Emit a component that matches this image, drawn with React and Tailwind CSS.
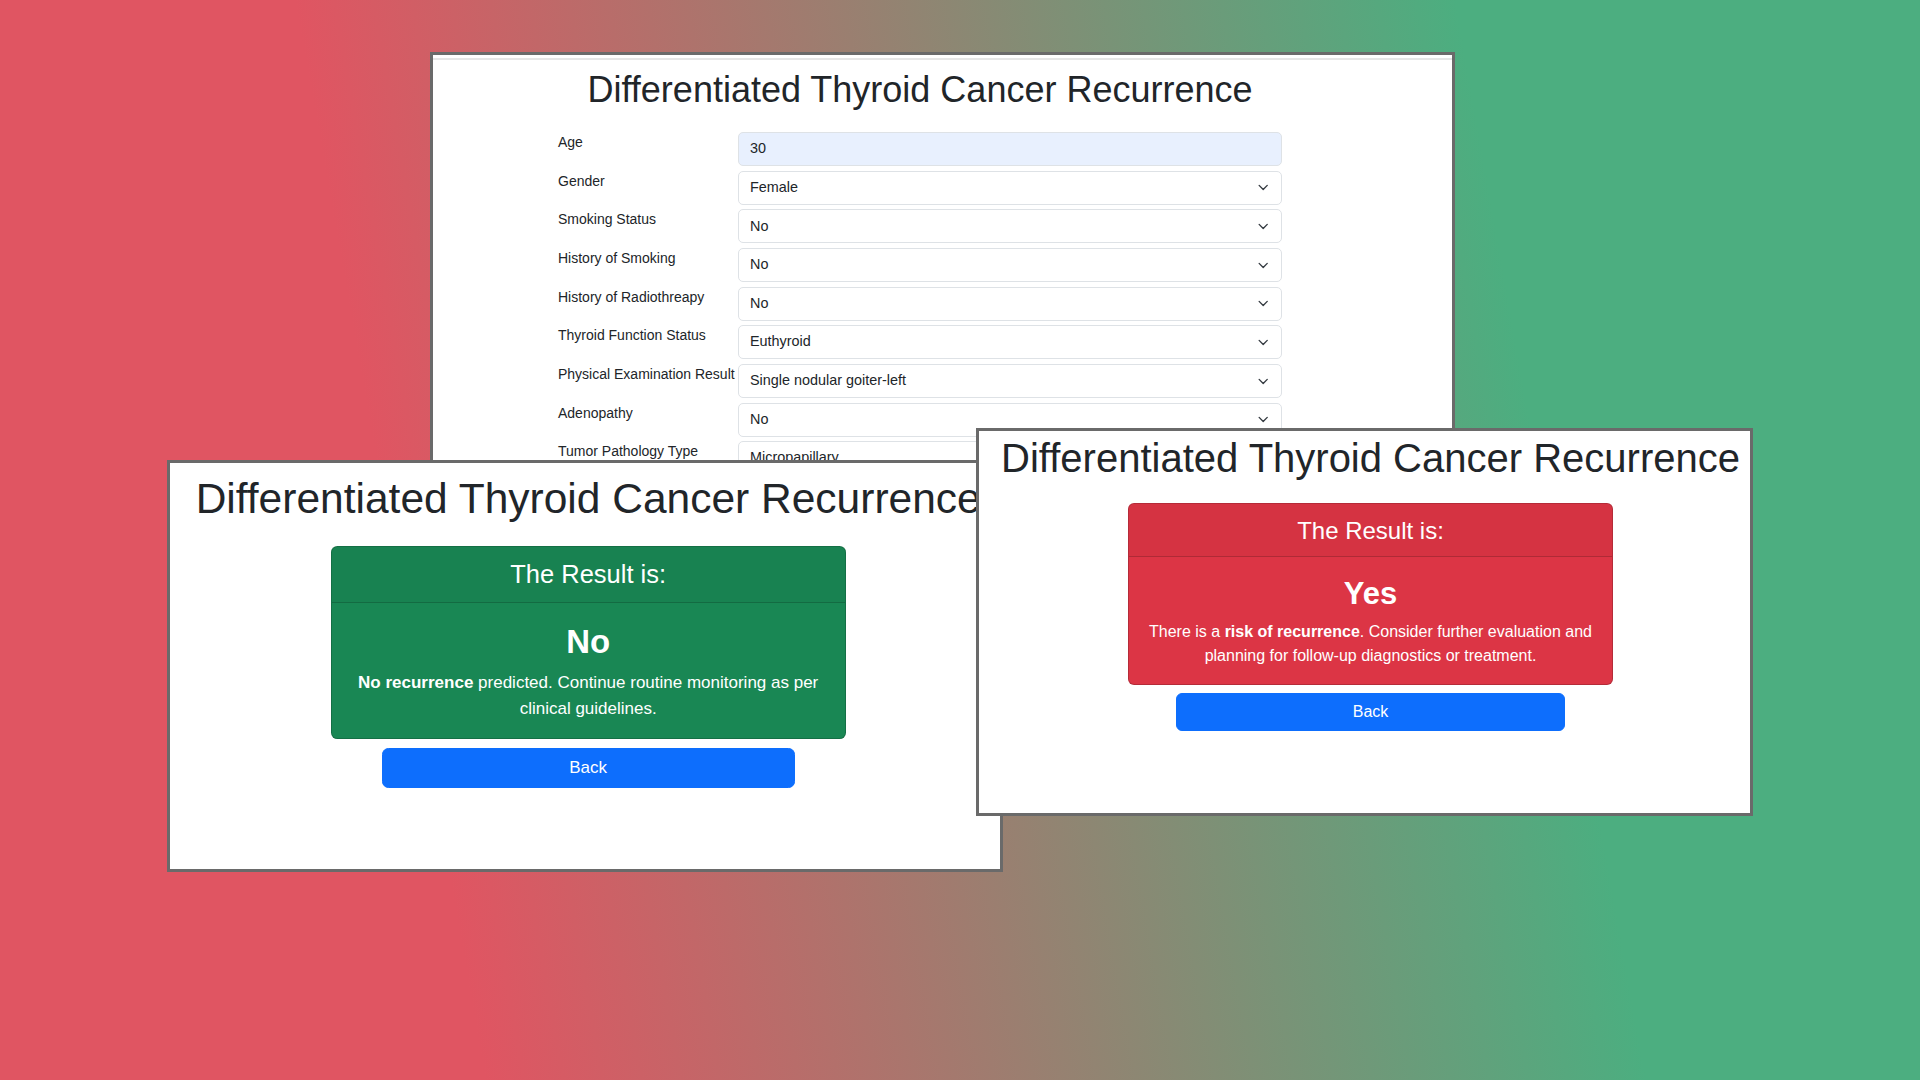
import React from 'react'

const FIELDS = [
  { label: 'Age', value: '30', input: true },
  { label: 'Gender', value: 'Female' },
  { label: 'Smoking Status', value: 'No' },
  { label: 'History of Smoking', value: 'No' },
  { label: 'History of Radiothreapy', value: 'No' },
  { label: 'Thyroid Function Status', value: 'Euthyroid' },
  { label: 'Physical Examination Result', value: 'Single nodular goiter-left' },
  { label: 'Adenopathy', value: 'No' },
  { label: 'Tumor Pathology Type', value: 'Micropapillary' },
]

function Chevron() {
  return (
    <svg width="14.4" height="10.8" viewBox="0 0 16 16" fill="none">
      <path d="m2 5 6 6 6-6" stroke="#343a40" strokeWidth="2" strokeLinecap="round" strokeLinejoin="round" />
    </svg>
  )
}

function FormWindow() {
  return (
    <div className="absolute left-[430px] top-[52px] h-[416px] w-[1025px] overflow-hidden border-[3px] border-[#6a6a6a] bg-white">
      <div className="mt-[3px] h-[2px] bg-[#e6e6e6]" />
      <div className="flex flex-col items-center pr-[45px]">
        <h1 className="mt-[8px] whitespace-nowrap text-[36px] leading-[43px]">Differentiated Thyroid Cancer Recurrence</h1>
        <div className="mt-[21px] flex w-[724px] flex-col gap-[4.67px]">
          {FIELDS.map((f) => (
            <div key={f.label} className="flex">
              <div className="w-[180px] whitespace-nowrap text-[14px] leading-[21.6px]">{f.label}</div>
              <div
                className={`flex h-[34px] w-[544px] items-center justify-between rounded-[5px] border border-[#dee2e6] px-[11px] text-[14.4px] ${
                  f.input ? 'bg-[#e8f0fe]' : 'bg-white'
                }`}
              >
                <span>{f.value}</span>
                {!f.input && <Chevron />}
              </div>
            </div>
          ))}
        </div>
      </div>
    </div>
  )
}

function ResultWindow({ positive, className, innerClass }) {
  return (
    <div className={`absolute overflow-hidden border-[3px] border-[#6a6a6a] bg-white ${className}`}>
      <div className={`flex flex-col items-center ${innerClass}`}>
        <h1 className="whitespace-nowrap text-[40px] leading-[48px]">Differentiated Thyroid Cancer Recurrence</h1>
        <div
          className={`mt-[21px] w-[485px] overflow-hidden rounded-[6px] border border-black/[0.175] text-center text-white ${
            positive ? 'bg-[#dc3545]' : 'bg-[#198754]'
          }`}
        >
          <div className="flex h-[53px] items-center justify-center border-b border-black/[0.175] bg-black/[0.03]">
            <h4 className="text-[24px] leading-[29px]">The Result is:</h4>
          </div>
          <div className="px-4 pb-4 pt-[18px]">
            <h2 className="text-[31px] font-bold leading-[38px]">{positive ? 'Yes' : 'No'}</h2>
            {positive ? (
              <p className="mt-[7px] text-base leading-6">
                There is a <strong>risk of recurrence</strong>. Consider further evaluation and planning for follow-up
                diagnostics or treatment.
              </p>
            ) : (
              <p className="mt-[7px] text-base leading-6">
                <strong>No recurrence</strong> predicted. Continue routine monitoring as per clinical guidelines.
              </p>
            )}
          </div>
        </div>
        <button className="mt-2 h-[38px] w-[389px] rounded-[6px] border border-[#0d6efd] bg-[#0d6efd] text-base text-white">
          Back
        </button>
      </div>
    </div>
  )
}

export default function App() {
  return (
    <div className="relative h-[1080px] w-[1920px] overflow-hidden bg-[linear-gradient(80deg,#e05562_23%,#4cae80_78%)] font-['Liberation_Sans',Arial,sans-serif] text-[#212529]">
      <FormWindow />
      <ResultWindow
        className="left-[167px] top-[460px] h-[412px] w-[836px]"
        innerClass="pl-[6px] pt-[9px] [zoom:1.0625]"
      />
      <ResultWindow positive className="left-[976px] top-[428px] h-[388px] w-[777px]" innerClass="pl-[12px] pt-[3px]" />
    </div>
  )
}
